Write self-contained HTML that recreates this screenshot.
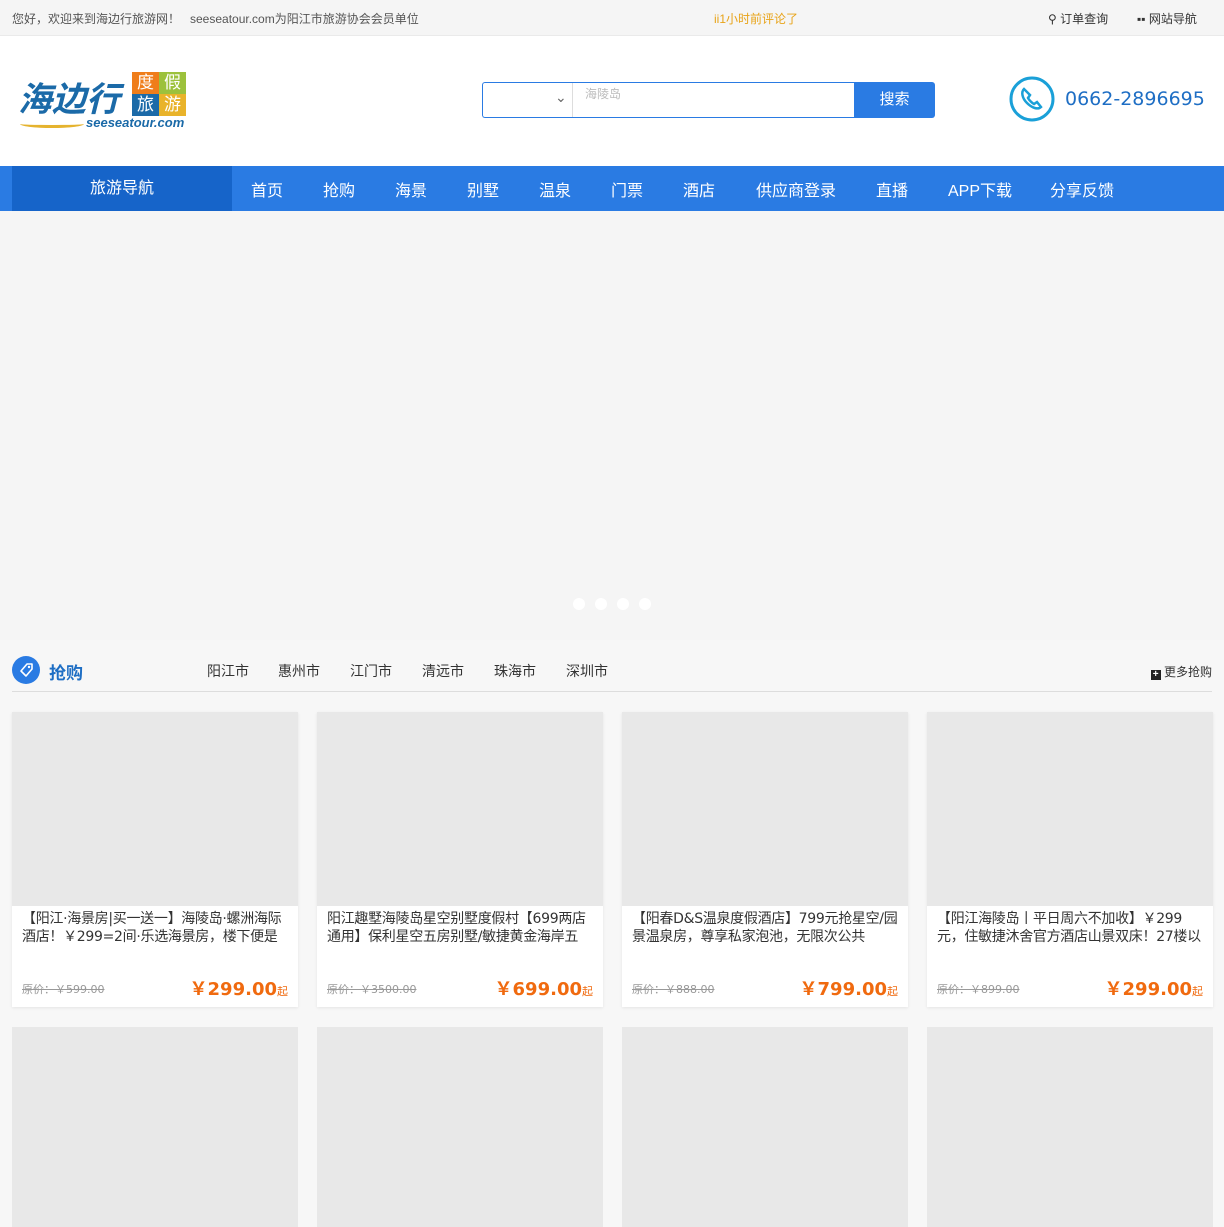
<!DOCTYPE html>
<html><head><meta charset="utf-8"><style>
*{margin:0;padding:0;box-sizing:border-box}
body{width:1224px;height:1200px;overflow:hidden;background:#f7f7f7;font-family:"Liberation Sans","Noto Sans CJK SC",sans-serif;color:#333}
.top{height:36px;background:#f5f5f5;border-bottom:1px solid #eaeaea;font-size:12px;color:#555;position:relative}
.top span{position:absolute;top:10px}
.hd{height:130px;background:#fff;position:relative}
.nav{height:45px;background:#2a7be3;position:relative;color:#fff;font-size:16px}
.nav .f{position:absolute;left:12px;top:0;width:220px;height:45px;background:#1664c9;text-align:center;line-height:45px}
.nav span{position:absolute;top:11px}
.banner{height:429px;background:#f5f5f5;position:relative}
.dot{position:absolute;top:598px;width:12px;height:12px;border-radius:50%;background:#fff}
.sec{position:absolute;left:12px;top:654px;width:1200px;height:38px;border-bottom:1px solid #ddd}
.card{position:absolute;width:286px;height:295px;background:#fff;box-shadow:0 1px 3px rgba(0,0,0,.08)}
.card .img{height:194px;background:#e8e8e8}
.card .t{margin:4px 10px 0;font-family:"DejaVu Sans","Noto Sans CJK SC",sans-serif;font-size:14px;line-height:18px;height:36px;overflow:hidden;color:#333;letter-spacing:-0.3px}
.card .op{position:absolute;left:10px;bottom:10px;font-family:"DejaVu Sans",sans-serif;font-size:11px;color:#999;text-decoration:line-through}
.card .p{position:absolute;right:10px;bottom:6px;color:#f06a0f;font-weight:bold;font-family:"DejaVu Sans","Noto Sans CJK SC",sans-serif;font-size:18px}
.card .p small{font-size:11px;font-weight:normal}
.card2{position:absolute;top:1027px;width:286px;height:200px;background:#e8e8e8}
</style></head><body>
<div class="top"><span style="left:12px">您好，欢迎来到海边行旅游网！&nbsp;&nbsp;&nbsp;seeseatour.com为阳江市旅游协会会员单位</span>
<span style="left:714px;color:#e8a317">ii1小时前评论了</span>
<span style="left:1048px;color:#333">&#9906; 订单查询</span><span style="left:1137px;color:#333">▪▪ 网站导航</span></div>
<div class="hd">
<div style="position:absolute;left:18px;top:36px;font-size:34px;font-weight:bold;font-style:italic;color:#1b6aa8">海边行</div>
<div style="position:absolute;left:132px;top:36px;width:54px;height:44px;font-size:17px;line-height:22px;color:#fff">
<div style="display:flex"><b style="width:27px;background:#ef7d1a;text-align:center;font-weight:normal">度</b><b style="width:27px;background:#9cc13c;text-align:center;font-weight:normal">假</b></div>
<div style="display:flex"><b style="width:27px;background:#1b6aa8;text-align:center;font-weight:normal">旅</b><b style="width:27px;background:#e9b32a;text-align:center;font-weight:normal">游</b></div></div>
<div style="position:absolute;left:86px;top:79px;font-size:13px;font-weight:bold;font-style:italic;color:#1b6aa8">seeseatour.com</div>
<div style="position:absolute;left:20px;top:84px;width:64px;height:8px;border-bottom:3px solid #e5b32e;border-radius:0 0 50% 50%"></div>
<div style="position:absolute;left:482px;top:46px;width:373px;height:36px;border:1px solid #2a7be3;border-right:none;border-radius:3px 0 0 3px">
<div style="position:absolute;left:0;top:0;width:90px;height:34px;border-right:1px solid #ddd"><span style="position:absolute;left:72px;top:6px;font-size:14px;color:#666">⌄</span></div>
<span style="position:absolute;left:102px;top:2px;font-size:12px;color:#bbb">海陵岛</span></div>
<div style="position:absolute;left:854px;top:46px;width:81px;height:36px;background:#2a7be3;border-radius:0 3px 3px 0;color:#fff;font-size:15px;text-align:center;line-height:36px">搜索</div>
<svg style="position:absolute;left:1009px;top:40px" width="46" height="46" viewBox="0 0 46 46"><circle cx="23" cy="23" r="21" fill="none" stroke="#1aa0d8" stroke-width="3"/><path d="M15 13c-3 3-2 9 3 14s11 7 14 4l-4-5-3 2c-2-1-5-4-6-6l2-3z" fill="none" stroke="#1aa0d8" stroke-width="2.5"/></svg>
<div style="position:absolute;left:1065px;top:52px;font-family:'DejaVu Sans',sans-serif;font-size:19px;color:#1e6ec4">0662-2896695</div>
</div>
<div class="nav"><div class="f">旅游导航</div>
<span style="left:251px">首页</span><span style="left:323px">抢购</span><span style="left:395px">海景</span><span style="left:467px">别墅</span><span style="left:539px">温泉</span><span style="left:611px">门票</span><span style="left:683px">酒店</span><span style="left:756px">供应商登录</span><span style="left:876px">直播</span><span style="left:948px">APP下载</span><span style="left:1050px">分享反馈</span></div>
<div class="banner"></div>
<div class="dot" style="left:573px"></div><div class="dot" style="left:595px"></div><div class="dot" style="left:617px"></div><div class="dot" style="left:639px"></div>
<div class="sec">
<svg style="position:absolute;left:0;top:2px" width="28" height="28" viewBox="0 0 28 28"><circle cx="14" cy="14" r="14" fill="#2a7be3"/><path d="M9 15l6-7 5 0 0 5-6 7z" fill="none" stroke="#fff" stroke-width="1.6" stroke-linejoin="round"/><circle cx="17" cy="11" r="1.2" fill="#fff"/></svg>
<div style="position:absolute;left:37px;top:5px;font-size:17px;font-weight:bold;color:#1e6ec4">抢购</div>
<div style="position:absolute;left:195px;top:7px;font-size:14px;color:#333">
<span style="position:absolute;left:0;white-space:nowrap">阳江市</span><span style="position:absolute;left:71px;white-space:nowrap">惠州市</span><span style="position:absolute;left:143px;white-space:nowrap">江门市</span><span style="position:absolute;left:215px;white-space:nowrap">清远市</span><span style="position:absolute;left:287px;white-space:nowrap">珠海市</span><span style="position:absolute;left:359px;white-space:nowrap">深圳市</span></div>
<div style="position:absolute;right:0;top:9px;font-size:12px;color:#333"><b style="display:inline-block;width:10px;height:10px;background:#222;color:#fff;font-size:10px;line-height:10px;text-align:center;vertical-align:-1px">+</b> 更多抢购</div></div>
<div class="card" style="left:12px;top:712px"><div class="img"></div><div class="t">【阳江·海景房|买一送一】海陵岛·螺洲海际酒店！￥299=2间·乐选海景房，楼下便是</div><div class="op">原价：￥599.00</div><div class="p">￥299.00<small>起</small></div></div>
<div class="card" style="left:317px;top:712px"><div class="img"></div><div class="t">阳江趣墅海陵岛星空别墅度假村【699两店通用】保利星空五房别墅/敏捷黄金海岸五</div><div class="op">原价：￥3500.00</div><div class="p">￥699.00<small>起</small></div></div>
<div class="card" style="left:622px;top:712px"><div class="img"></div><div class="t">【阳春D&amp;S温泉度假酒店】799元抢星空/园景温泉房，尊享私家泡池，无限次公共</div><div class="op">原价：￥888.00</div><div class="p">￥799.00<small>起</small></div></div>
<div class="card" style="left:927px;top:712px"><div class="img"></div><div class="t">【阳江海陵岛丨平日周六不加收】￥299元，住敏捷沐舍官方酒店山景双床！27楼以</div><div class="op">原价：￥899.00</div><div class="p">￥299.00<small>起</small></div></div>
<div class="card2" style="left:12px"></div><div class="card2" style="left:317px"></div><div class="card2" style="left:622px"></div><div class="card2" style="left:927px"></div>
</body></html>
